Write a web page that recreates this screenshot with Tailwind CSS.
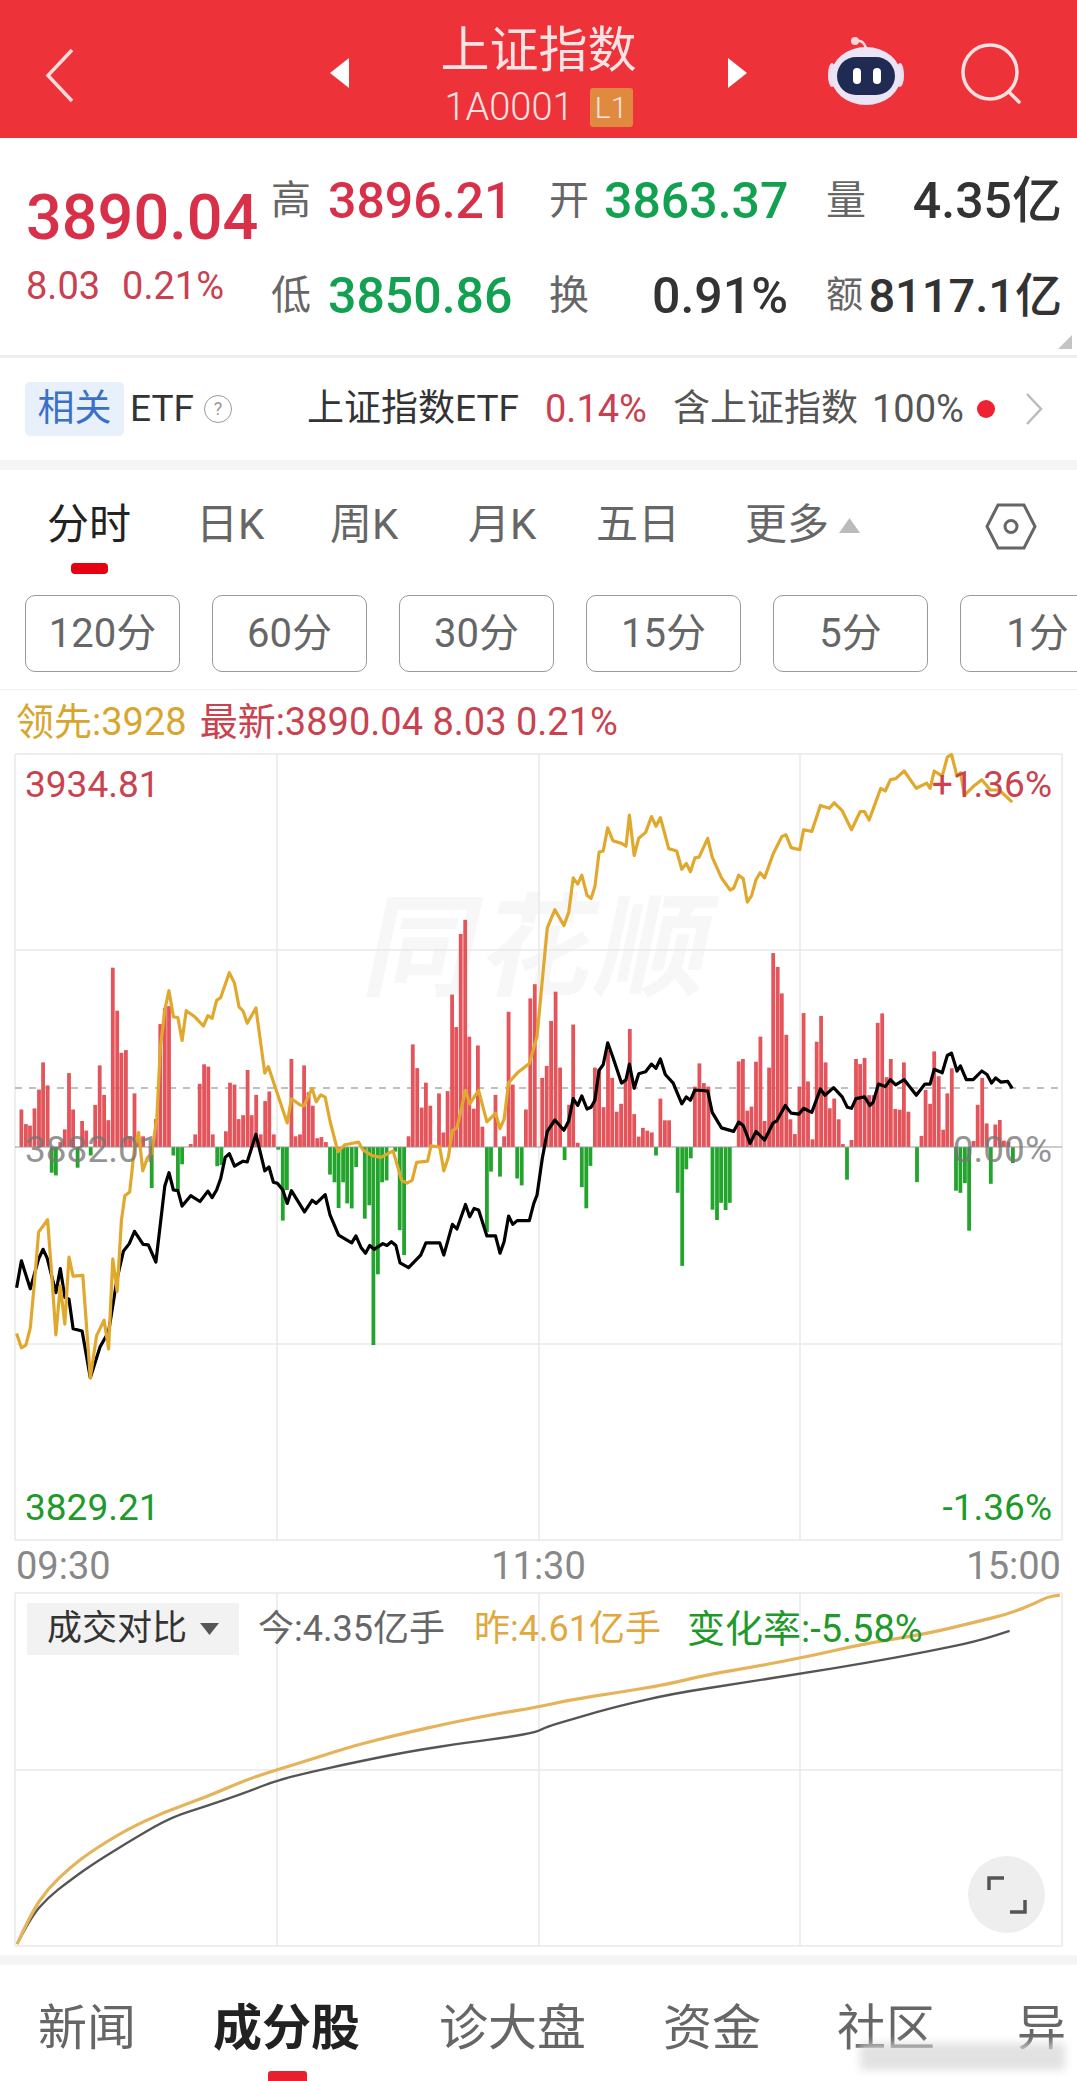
<!DOCTYPE html>
<html lang="en">

<head>
    <meta charset="UTF-8">
    <title>上证指数</title>
    <script src="https://cdn.jsdelivr.net/npm/@tailwindcss/browser@4"></script>
</head>

<body class="bg-white font-['Roboto','Noto_Sans_CJK_SC',sans-serif] overflow-hidden">
    <div class="relative w-[1077px] h-[2081px] overflow-hidden">
        <!-- header -->
        <header class="flex items-start h-[138px] bg-[#ee3239] pl-[45px]">
            <svg class="mt-[48px] w-[29px] h-[55px]" viewBox="0 0 29 55" fill="none" stroke="#fbdcdc" stroke-width="3.5">
                <path d="M27 2 3 27.5 27 53"></path>
            </svg>
            <svg class="mt-[58px] ml-[256px] w-[19px] h-[30px]" viewBox="0 0 19 30" fill="#fff">
                <path d="M19 0V30L0 15z"></path>
            </svg>
            <div class="w-[379px] flex flex-col items-center text-[#fde3e3]">
                <div class="mt-[25px] text-[49px] leading-[52px]">上证指数</div>
                <div class="mt-[10px] flex items-center">
                    <span class="text-[38px] leading-[40px] font-light">1A0001</span>
                    <span class="ml-[16px] w-[43px] h-[39px] bg-[#df8a3f] rounded-[3px] text-[30px] leading-[39px] text-center font-light">L1</span>
                </div>
            </div>
            <svg class="mt-[58px] w-[19px] h-[30px]" viewBox="0 0 19 30" fill="#fff">
                <path d="M0 0V30L19 15z"></path>
            </svg>
            <!-- robot -->
            <svg class="mt-[36px] ml-[81px] w-[76px] h-[70px]" viewBox="0 0 76 70">
                <path d="M38 12C36 6 32 4 28 5" fill="none" stroke="#f5dbe4" stroke-width="2.5"></path>
                <circle cx="27" cy="5" r="4" fill="#f7d7da"></circle>
                <ellipse cx="4" cy="39" rx="4" ry="12" fill="#e9dff0"></ellipse>
                <ellipse cx="72" cy="39" rx="4" ry="12" fill="#e9dff0"></ellipse>
                <ellipse cx="38" cy="40" rx="35" ry="29" fill="#ebe4f5"></ellipse>
                <rect x="9" y="21" width="58" height="38" rx="19" fill="#1f2b52"></rect>
                <rect x="25" y="32" width="8" height="16" rx="4" fill="#fff"></rect>
                <rect x="45" y="32" width="8" height="16" rx="4" fill="#fff"></rect>
            </svg>
            <svg class="mt-[41px] ml-[57px] w-[62px] h-[64px]" viewBox="0 0 62 64" fill="none" stroke="#fde0e0" stroke-width="3.5" stroke-linecap="round">
                <circle cx="29" cy="31" r="27"></circle>
                <path d="M48 51 58 61"></path>
            </svg>
        </header>

        <!-- quote -->
        <section class="relative flex h-[220px] border-b-[3px] border-[#eeeeee]">
            <div class="w-[271px] pl-[26px]">
                <div class="mt-[43px] text-[63px] leading-[74px] font-medium text-[#d9304a]">3890.04</div>
                <div class="mt-[9px] flex gap-[22px] text-[38px] leading-[44px] text-[#c9404f]">
                    <span>8.03</span><span>0.21%</span>
                </div>
            </div>
            <div class="mt-[35px] grid grid-cols-[278px_277px_236px] gap-y-[39px] grid-rows-[56px_56px] text-[50px] leading-[56px] font-medium text-[#333333] h-[151px] whitespace-nowrap">
                <div class="flex"><span class="w-[57px] text-[40px] font-normal text-[#666666]">高</span><span class="text-[#d9304a]">3896.21</span></div>
                <div class="flex"><span class="w-[55px] text-[40px] font-normal text-[#666666]">开</span><span class="text-[#12a150]">3863.37</span></div>
                <div class="flex justify-between"><span class="text-[40px] font-normal text-[#666666]">量</span><span>4.35亿</span></div>
                <div class="flex"><span class="w-[57px] text-[40px] font-normal text-[#666666]">低</span><span class="text-[#12a150]">3850.86</span></div>
                <div class="flex justify-between pr-[38px]"><span class="text-[40px] font-normal text-[#666666]">换</span><span>0.91%</span></div>
                <div class="flex justify-between"><span class="text-[37px] font-normal text-[#666666]">额</span><span class="text-[47px]">8117.1亿</span></div>
            </div>
            <svg class="absolute right-[5px] bottom-[6px] w-[14px] h-[14px]" viewBox="0 0 14 14" fill="#c4c4c4">
                <path d="M14 0V14H0z"></path>
            </svg>
        </section>

        <!-- related ETF -->
        <section class="flex items-center h-[112px] text-[37px] leading-[44px] border-b-[10px] border-[#f5f5f5]">
            <span class="shrink-0 ml-[25px] w-[99px] h-[54px] rounded-[5px] bg-[#e8f0fb] text-[#3b70c8] text-center leading-[54px]">相关</span>
            <span class="shrink-0 ml-[6px] w-[68px] text-[#333333]">ETF</span>
            <span class="shrink-0 ml-[6px] w-[28px] h-[28px] rounded-full border border-[#999999] text-[18px] leading-[26px] text-center text-[#999999]">?</span>
            <span class="shrink-0 ml-[75px] w-[238px] text-[#333333]">上证指数ETF</span>
            <span class="shrink-0 w-[128px] text-[38px] text-[#c9404f]">0.14%</span>
            <span class="shrink-0 w-[199px] text-[#555555]">含上证指数</span>
            <span class="shrink-0 w-[105px] text-[38px] text-[#555555]">100%</span>
            <span class="shrink-0 w-[18px] h-[18px] rounded-full bg-[#ee2233]"></span>
            <svg class="shrink-0 ml-[31px] w-[17px] h-[32px]" viewBox="0 0 17 32" fill="none" stroke="#bbbbbb" stroke-width="2.5">
                <path d="M1 1 15 16 1 31"></path>
            </svg>
        </section>

        <!-- period tabs -->
        <section class="relative h-[125px] text-[42px] leading-[48px] text-[#666666]">
            <div class="flex pt-[31px]">
                <span class="shrink-0 ml-[47px] w-[149px] text-[#222222]">分时</span>
                <span class="shrink-0 w-[134px]">日K</span>
                <span class="shrink-0 w-[138px]">周K</span>
                <span class="shrink-0 w-[128px]">月K</span>
                <span class="shrink-0 w-[149px]">五日</span>
                <span class="shrink-0">更多</span>
                <svg class="shrink-0 mt-[17px] ml-[10px] w-[21px] h-[15px]" viewBox="0 0 21 15" fill="#bbbbbb">
                    <path d="M10.5 0 21 15H0z"></path>
                </svg>
                <svg class="shrink-0 mt-[2px] ml-[125px] w-[52px] h-[47px]" viewBox="0 0 52 47" fill="none" stroke="#666666" stroke-width="3">
                    <path d="M13 2H39L50 23.5 39 45H13L2 23.5z"></path>
                    <circle cx="26" cy="23.5" r="6"></circle>
                </svg>
            </div>
            <div class="absolute left-[71px] top-[93px] w-[37px] h-[11px] rounded-[4px] bg-[#e60012]"></div>
        </section>

        <!-- kline period buttons -->
        <section class="flex gap-[32px] pl-[25px] h-[95px] border-b border-[#eeeeee] text-[40px] text-[#666666]">
            <div class="shrink-0 w-[155px] h-[77px] rounded-[10px] border border-[#999999] text-center leading-[75px]">120分</div>
            <div class="shrink-0 w-[155px] h-[77px] rounded-[10px] border border-[#999999] text-center leading-[75px]">60分</div>
            <div class="shrink-0 w-[155px] h-[77px] rounded-[10px] border border-[#999999] text-center leading-[75px]">30分</div>
            <div class="shrink-0 w-[155px] h-[77px] rounded-[10px] border border-[#999999] text-center leading-[75px]">15分</div>
            <div class="shrink-0 w-[155px] h-[77px] rounded-[10px] border border-[#999999] text-center leading-[75px]">5分</div>
            <div class="shrink-0 w-[155px] h-[77px] rounded-[10px] border border-[#999999] text-center leading-[75px]">1分</div>
        </section>

        <!-- legend -->
        <div class="flex h-[64px] pl-[16px] pt-[10px] text-[38px] leading-[44px] gap-[13px]">
            <span class="text-[#d8a62e]">领先:3928</span>
            <span class="text-[#c8434f]">最新:3890.04 8.03 0.21%</span>
        </div>

        <!-- main chart -->
        <section class="relative h-[787px]">
            <div class="absolute left-[368px] top-[130px] -skew-x-12 text-[112px] leading-[130px] font-bold text-[#f7f7f7] tracking-[4px]">同花顺</div>
            <svg id="js_mainChart" class="relative block overflow-visible" width="1077" height="787" viewBox="0 754 1077 787"></svg>
            <span class="absolute left-[25px] top-[9px] text-[37px] leading-[44px] text-[#c8434f]">3934.81</span>
            <span class="absolute right-[25px] top-[9px] text-[37px] leading-[44px] text-[#c8434f]">+1.36%</span>
            <span class="absolute left-[25px] top-[374px] text-[37px] leading-[44px] text-[#777777]/80">3882.01</span>
            <span class="absolute right-[25px] top-[374px] text-[37px] leading-[44px] text-[#777777]/80">0.00%</span>
            <span class="absolute left-[25px] top-[732px] text-[37px] leading-[44px] text-[#1f9a2a]">3829.21</span>
            <span class="absolute right-[25px] top-[732px] text-[37px] leading-[44px] text-[#1f9a2a]">-1.36%</span>
        </section>

        <!-- time axis -->
        <div class="flex justify-between h-[52px] pl-[16px] pr-[16px] pt-[3px] text-[38px] leading-[44px] text-[#888888]">
            <span>09:30</span><span>11:30</span><span>15:00</span>
        </div>

        <!-- volume compare chart -->
        <section class="relative h-[362px]">
            <svg id="js_compareChart" class="block overflow-visible" width="1077" height="362" viewBox="0 1593 1077 362"></svg>
            <div class="absolute left-[27px] top-[10px] flex items-center w-[212px] h-[52px] pl-[20px] bg-[#f2f2f2] text-[35px] text-[#333333]">
                成交对比
                <svg class="ml-[13px] w-[19px] h-[12px]" viewBox="0 0 19 12" fill="#555555">
                    <path d="M0 0H19L9.500 12z"></path>
                </svg>
            </div>
            <div class="absolute left-[258px] top-[14px] flex text-[36px] leading-[44px]">
                <span class="shrink-0 w-[216px] text-[#666666]">今:4.35亿手</span>
                <span class="shrink-0 w-[213px] text-[#e0a83e]">昨:4.61亿手</span>
                <span class="shrink-0 text-[38px] text-[#1f9a2a]">变化率:-5.58%</span>
            </div>
            <div class="absolute left-[968px] top-[263px] flex items-center justify-center w-[77px] h-[77px] rounded-full bg-[#eeeeee]">
                <svg class="w-[40px] h-[38px]" viewBox="0 0 40 38" fill="none" stroke="#555555" stroke-width="3.5">
                    <path d="M2 14V2H17M38 24V36H23"></path>
                </svg>
            </div>
        </section>

        <!-- bottom tabs -->
        <nav class="relative h-[126px] border-t-[10px] border-[#f5f5f5] text-[49px] leading-[60px] text-[#666666]">
            <div class="flex pt-[34px] whitespace-nowrap">
                <span class="shrink-0 ml-[38px] w-[175px]">新闻</span>
                <span class="shrink-0 w-[226px] font-bold text-[#222222]">成分股</span>
                <span class="shrink-0 w-[224px]">诊大盘</span>
                <span class="shrink-0 w-[174px]">资金</span>
                <span class="shrink-0 w-[180px]">社区</span>
                <span class="shrink-0">异</span>
            </div>
            <div class="absolute left-[268px] bottom-0 w-[39px] h-[10px] rounded-t-[3px] bg-[#e8202e]"></div>
            <!-- blurred image watermark -->
            <div class="absolute left-[860px] top-[78px] w-[205px] h-[27px] bg-[#d8d8d8]/75 blur-[4px]"></div>
        </nav>
    </div>

    <script>
        const chart = {
            // points are read from crops of the reference, so convert them to page px
            fromLeft: (p) => [p[0] / 2.9, 780 + p[1] / 2.61],
            fromRight: (p) => [537 + p[0] / 2.9, 740 + p[1] / 2.9],
            fromBottom: (p) => [p[0] / 1.456, 1520 + p[1] / 2.795],

            pairs: function (flat) {
                const out = [];
                for (let i = 0; i < flat.length; i += 2) out.push([flat[i], flat[i + 1]]);
                return out;
            },

            line: function (points, color, width) {
                const d = points.map((p) => p[0].toFixed(1) + ',' + p[1].toFixed(1)).join(' ');
                return `<polyline points="${d}" fill="none" stroke="${color}" stroke-width="${width}" stroke-linejoin="round"/>`;
            },

            // the compare curves are smooth, so go through the midpoints
            curve: function (points, color, width) {
                let d = `M${points[0][0].toFixed(1)} ${points[0][1].toFixed(1)}`;
                for (let i = 1; i < points.length - 1; i++) {
                    const mx = (points[i][0] + points[i + 1][0]) / 2;
                    const my = (points[i][1] + points[i + 1][1]) / 2;
                    d += `Q${points[i][0].toFixed(1)} ${points[i][1].toFixed(1)} ${mx.toFixed(1)} ${my.toFixed(1)}`;
                }
                const last = points[points.length - 1];
                d += `L${last[0].toFixed(1)} ${last[1].toFixed(1)}`;
                return `<path d="${d}" fill="none" stroke="${color}" stroke-width="${width}"/>`;
            },

            grid: function (hLines, top, bottom) {
                let out = '';
                hLines.forEach((y) => {
                    out += `<line x1="15" x2="1062" y1="${y}" y2="${y}" stroke="#e8e8e8" stroke-width="1.5"/>`;
                });
                [15, 277, 539, 800, 1062].forEach((x) => {
                    out += `<line x1="${x}" x2="${x}" y1="${top}" y2="${bottom}" stroke="#e8e8e8" stroke-width="1.5"/>`;
                });
                return out;
            },

            bars: function (flat, convert, baseY) {
                let out = '';
                this.pairs(flat).forEach((bar) => {
                    const p = convert(bar);
                    const up = bar[1] < baseY;
                    const y = up ? p[1] : 1147;
                    const h = up ? 1147 - p[1] : p[1] - 1147;
                    out += `<rect x="${(p[0] - 1.9).toFixed(1)}" y="${y.toFixed(1)}" width="3.8" height="${h.toFixed(1)}" fill="${up ? '#e4545b' : '#23a52d'}"/>`;
                });
                return out;
            }
        };

        const barsLeft = [62,860,75,898,87,902,100,857,113,808,125,737,138,797,150,1025,162,1032,175,945,188,912,200,765,212,860,225,1012,238,890,250,915,263,980,276,848,289,745,302,822,314,888,327,490,340,602,352,712,365,705,377,930,390,818,402,940,415,930,440,1065,452,885,465,637,478,595,490,590,503,980,516,1070,528,1003,553,950,566,925,579,793,592,742,604,748,617,925,630,1008,642,1005,655,917,667,790,680,795,692,885,705,875,718,757,730,875,743,822,756,925,769,838,781,813,794,925,807,965,820,1150,832,1070,845,728,857,930,870,925,882,745,895,815,907,850,920,935,932,932,945,945,957,1030,970,1050,982,1117,995,1050,1007,1105,1020,1118,1033,1010,1058,1145,1071,1110,1083,1475,1096,1290,1108,1050,1121,1045,1146,970,1159,1175,1172,1240,1185,930,1197,690,1210,752,1223,855,1235,790,1248,850,1273,818,1286,920,1298,812,1311,560,1323,645,1336,402,1349,365,1361,670,1374,858,1386,693,1399,905,1412,1180,1424,1022,1437,822,1450,1035,1462,930,1475,605,1487,795,1500,1040,1513,1058,1525,860,1538,570,1551,533];
        const barsRight = [15,980,28,945,41,815,54,730,67,950,80,1218,93,1058,105,825,118,1168,130,1297,143,1358,155,1235,168,950,180,955,193,1065,206,900,218,980,231,1078,244,1055,257,985,269,838,282,1085,295,1150,307,1125,320,1133,333,1138,345,1205,358,1040,371,1103,383,1103,408,1313,421,1525,433,1245,446,1213,458,1005,471,938,484,995,497,1005,509,1362,522,1392,534,1342,547,1363,559,1342,585,932,597,925,610,1075,622,1063,635,933,648,860,660,1105,673,950,685,618,698,658,710,735,723,855,735,1100,748,1143,761,1005,773,792,786,990,799,1158,811,875,824,800,837,935,849,1068,862,1040,875,1100,887,1172,899,1275,912,1160,925,925,937,940,950,922,963,1030,976,1030,988,820,1001,793,1014,978,1026,925,1039,1070,1052,1072,1064,935,1077,1078,1102,1282,1115,1148,1127,1015,1140,1055,1152,903,1165,975,1178,1130,1190,1025,1203,952,1215,1307,1228,1313,1241,1285,1253,1423,1266,1163,1278,1058,1291,980,1304,1112,1316,1287,1329,1115,1342,1102,1354,1162,1367,1165,1380,1227];

        const goldLeft = [48,1445,62,1482,75,1475,88,1430,100,1310,112,1180,138,1148,150,1290,162,1448,175,1320,188,1420,200,1245,212,1295,240,1293,262,1560,280,1450,302,1410,315,1485,327,1250,340,1335,352,1150,362,1085,376,1075,390,960,402,920,414,1020,428,985,440,975,455,880,465,700,478,600,490,550,503,618,516,620,528,680,540,602,565,618,590,642,603,615,615,622,628,575,640,568,665,503,680,530,693,592,705,603,717,635,742,595,768,765,778,748,833,895,845,832,870,848,882,850,905,805,917,840,930,822,943,828,957,890,980,970,1000,952,1040,945,1052,965,1078,980,1105,985,1140,968,1165,1045,1180,1052,1195,1045,1208,998,1240,995,1250,955,1275,958,1287,1020,1300,985,1312,915,1325,908,1350,810,1362,845,1388,810,1412,892,1437,870,1450,910,1462,885,1475,790,1500,765,1535,740];
        const goldRight = [0,860,15,700,30,545,52,492,78,538,92,500,105,400,118,418,130,392,145,450,157,460,168,425,180,325,192,322,205,255,220,292,245,300,258,308,268,218,282,335,295,285,315,268,332,222,345,250,358,225,382,315,405,322,420,375,433,358,445,382,458,342,470,340,495,285,508,340,535,400,560,435,570,430,585,392,598,402,610,470,622,452,635,405,647,385,660,400,685,330,710,280,722,275,737,312,762,318,773,260,797,265,822,190,848,198,862,182,885,205,912,260,937,208,950,208,963,232,997,140,1010,148,1025,115,1040,112,1065,90,1100,140,1130,125,1140,140,1152,90,1175,105,1190,50,1202,42,1218,105,1228,95,1240,160,1265,135,1290,115,1315,145,1340,145,1378,180];
        const blackLeft = [48,1325,62,1255,88,1328,112,1250,125,1225,137,1248,162,1338,175,1275,188,1350,200,1355,212,1432,238,1438,262,1560,290,1480,315,1440,340,1300,358,1230,375,1210,390,1178,415,1212,430,1213,452,1258,478,1060,490,1025,503,1070,516,1072,528,1112,553,1085,580,1100,603,1073,615,1090,628,1070,640,1040,653,985,665,975,680,1008,705,995,717,997,742,925,768,1020,780,1010,793,1050,805,1053,820,1070,833,1105,845,1072,883,1127,905,1097,917,1105,943,1082,957,1135,982,1188,1020,1208,1032,1190,1047,1220,1060,1235,1072,1215,1085,1225,1110,1210,1122,1215,1135,1205,1148,1215,1160,1260,1185,1273,1220,1240,1235,1208,1275,1208,1287,1240,1312,1160,1325,1172,1350,1108,1362,1140,1375,1118,1388,1122,1412,1190,1437,1190,1450,1235,1462,1205,1475,1138,1487,1160,1500,1150,1535,1150,1548,1105];
        const blackRight = [0,1320,15,1215,30,1135,52,1102,78,1132,92,1105,105,1040,118,1060,130,1032,145,1070,157,1065,168,1045,180,958,192,942,205,878,220,920,245,995,258,985,268,940,282,1010,295,968,315,962,332,940,345,952,358,925,372,970,395,995,420,1055,433,1035,445,1045,458,1015,495,1018,508,1080,535,1125,570,1135,585,1108,598,1118,618,1170,635,1135,660,1160,685,1110,695,1105,720,1060,737,1082,760,1085,773,1068,797,1080,822,1012,835,1030,860,1008,885,1035,900,1065,912,1068,925,1040,950,1035,965,1060,975,1050,990,998,1010,1005,1025,985,1040,1000,1065,985,1100,1030,1125,998,1140,998,1152,955,1175,965,1190,915,1202,908,1218,960,1228,945,1245,985,1265,985,1290,960,1305,970,1318,995,1330,980,1345,992,1365,990,1378,1010];
        const goldCompare = [25,1185,45,1100,70,1030,100,975,130,930,180,870,240,815,300,775,360,725,400,700,460,665,520,628,580,600,660,565,720,543,783,523,830,503,900,482,970,460,1030,432,1100,410,1180,380,1260,345,1350,318,1420,285,1470,262,1510,230,1525,215,1543,210];
        const greyCompare = [25,1185,45,1110,70,1055,100,1010,140,955,200,885,250,830,300,800,360,760,400,730,450,705,510,680,600,645,680,622,740,607,783,592,795,578,840,553,900,520,980,485,1080,455,1170,428,1260,400,1350,368,1420,340,1470,310];

        const gold = chart.pairs(goldLeft).map(chart.fromLeft).concat(chart.pairs(goldRight).map(chart.fromRight));
        const black = chart.pairs(blackLeft).map(chart.fromLeft).concat(chart.pairs(blackRight).map(chart.fromRight));

        document.querySelector('#js_mainChart').innerHTML =
            chart.grid([754, 950, 1344, 1540], 754, 1540) +
            '<line x1="15" x2="1062" y1="1088" y2="1088" stroke="#aaaaaa" stroke-width="1.5" stroke-dasharray="7 7"/>' +
            chart.bars(barsLeft, chart.fromLeft, 958) +
            chart.bars(barsRight, chart.fromRight, 1183) +
            '<line x1="15" x2="1062" y1="1147" y2="1147" stroke="#999999" stroke-width="1"/>' +
            chart.line(black, '#000000', 3.2) +
            chart.line(gold, '#e0a92e', 3.2);

        document.querySelector('#js_compareChart').innerHTML =
            chart.grid([1593, 1770, 1946], 1593, 1946) +
            chart.curve(chart.pairs(greyCompare).map(chart.fromBottom), '#555555', 2.4) +
            chart.curve(chart.pairs(goldCompare).map(chart.fromBottom), '#e5b35a', 3.2);
    </script>
</body>

</html>
